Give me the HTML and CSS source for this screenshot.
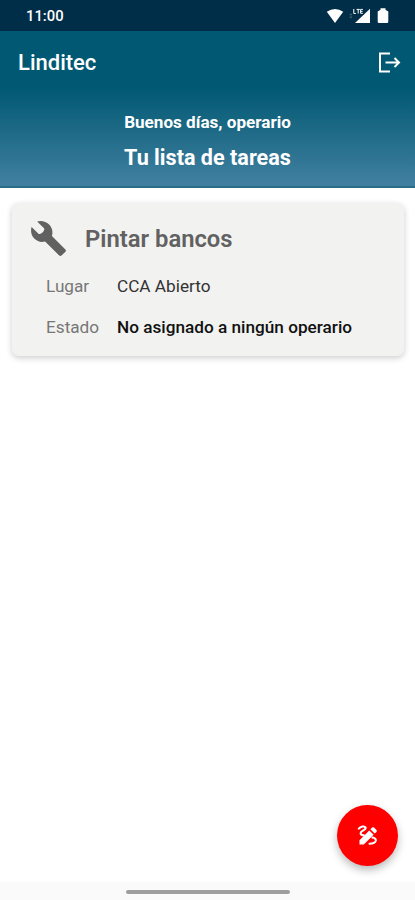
FILE: index.html
```html
<!DOCTYPE html>
<html lang="es">
<head>
  <meta charset="UTF-8" />
  <meta name="viewport" content="width=device-width, initial-scale=1.0"/>
  <title>Linditec</title>
  <link rel="stylesheet" href="styles.css">
</head>
<body>
  <div class="status-bar">
    <span class="clock">11:00</span>
    <div class="status-icons">
      <svg class="wifi" width="18" height="16" viewBox="0 0 18 16"><path d="M0.8 3.8Q9-1.600 17.2 3.8L9 15z"/></svg>
      <svg class="signal" width="22" height="16" viewBox="0 0 22 16">
        <path d="M21 0.7V15H6z"/>
        <path class="lte-back" d="M3 0h12v6.5H3z"/>
        <path class="lte" d="M4.8 1v4.5h2M7.6 1.4h3.2M9.2 1.4v4.1M13.8 1.4h-2.2v3.9h2.2M11.6 3.3h2"/>
        <path class="data" d="M0.4 7.2l1.5-2 1.5 2zM0.4 8.5l1.5 2 1.5-2z"/>
      </svg>
      <svg class="battery" width="12" height="16" viewBox="0 0 12 16"><path d="M3.5 0.3h5v1.5l2.8 1.7v10.2q0 1.3-1.3 1.3H2q-1.3 0-1.3-1.3V3.5l2.8-1.7z"/></svg>
    </div>
  </div>

  <header>
    <div class="toolbar">
      <span class="app-name">Linditec</span>
      <svg class="logout" width="24" height="22" viewBox="0 0 24 22"><path d="M13 1.500H3v18h10M8.500 10.500H22M17.500 6l4.500 4.500-4.500 4.500"/></svg>
    </div>
    <p class="greeting">Buenos días, operario</p>
    <h1>Tu lista de tareas</h1>
  </header>

  <main>
    <div class="card">
      <div class="card-title">
        <svg width="39" height="39" viewBox="0 0 24 24"><path d="M22.400 18.800l-8.300-8.300c.8-2.600.1-5.200-1.700-7.100C10.300 1.300 7.600.7 5 1.500l4.400 4.300c.2 1.700-1.500 3.600-3.400 3.500L1.600 4.900C.8 7.400 1.400 10.200 3.400 12.200c1.800 1.800 4.200 2.300 6.500 1.600l8.700 8.700c.4.4 1 .4 1.400 0l2.400-2.300c.4-.4.4-1 0-1.400z"/></svg>
        <h2>Pintar bancos</h2>
      </div>
      <div class="row">
        <span class="label">Lugar</span>
        <span class="place">CCA Abierto</span>
      </div>
      <div class="row">
        <span class="label">Estado</span>
        <span class="state">No asignado a ningún operario</span>
      </div>
    </div>
  </main>

  <button class="fab" aria-label="Nueva tarea">
    <svg width="22" height="22" viewBox="0 0 22 22">
      <path class="pencil" d="M2.5 15.2L12.3 5.4l4.3 4.3L6.8 19.5H2.5zM13.4 4.3l1.7-1.7q1-.9 2 0l2.3 2.3q1 1 0 2l-1.7 1.7z"/>
      <path class="stroke" d="M1.8 3.700C3.500 1.500 7.500.5 8.600 2.500c1.200 2.400-5.200 3.300-5 5.800.1 1.300 1.600 1.900 3.200 1.900M15.500 12.600c2.400.3 3.700 1.500 3.300 3.200-.5 1.900-2.800 2.900-6.300 2.900"/>
    </svg>
  </button>

  <div class="nav-bar"><div class="handle"></div></div>
</body>
</html>
```
FILE: styles.css
```css
* {
  margin: 0;
  padding: 0;
  box-sizing: border-box;
}

body {
  height: 900px;
  display: flex;
  flex-direction: column;
  background-color: #fff;
  font-family: Roboto, sans-serif;
  overflow: hidden;
}

.status-bar {
  height: 31px;
  padding: 0 26px;
  display: flex;
  justify-content: space-between;
  align-items: center;
  background-color: #002d47;
  color: #fff;
}

.clock {
  font-size: 14.8px;
  font-weight: 500;
}

.status-icons {
  display: flex;
  fill: #fff;
}

.signal {
  margin-left: 5px;
}

.battery {
  margin-left: 6px;
}

.lte-back {
  fill: #002d47;
}

.lte {
  fill: none;
  stroke: #fff;
  stroke-width: 1;
}

.data {
  fill: #48677c;
}

header {
  height: 157px;
  background: linear-gradient(#005872 0%, #005872 36%, #407f9f 98%);
  border-bottom: 2px solid #2c6d88;
  color: #fff;
  text-align: center;
}

.toolbar {
  height: 63px;
  padding: 0 14px 0 18px;
  display: flex;
  justify-content: space-between;
  align-items: center;
}

.app-name {
  font-size: 22px;
  font-weight: 500;
}

.logout {
  fill: none;
  stroke: #fff;
  stroke-width: 2;
}

.greeting {
  margin-top: 17px;
  font-size: 17.1px;
  line-height: 22px;
  font-weight: 700;
}

h1 {
  margin-top: 11px;
  font-size: 21.6px;
  line-height: 27px;
  font-weight: 700;
}

main {
  flex: 1;
  padding: 15px 11px 15px 12px;
}

.card {
  height: 153px;
  padding: 15px 17px;
  background-color: #f2f2f0;
  border-radius: 7px;
  box-shadow: 0 2px 6px rgba(0, 0, 0, 0.2);
}

.card-title {
  height: 41px;
  display: flex;
  align-items: center;
  gap: 17px;
  color: #616161;
  fill: #616161;
}

h2 {
  font-size: 23.8px;
  font-weight: 600;
}

.row {
  height: 41px;
  padding-left: 17px;
  display: flex;
  align-items: center;
  font-size: 17.2px;
}

.card-title + .row {
  margin-top: 6px;
}

.label {
  width: 71px;
  color: #777;
}

.place {
  color: #333;
}

.state {
  color: #111;
  font-weight: 500;
}

.fab {
  position: absolute;
  left: 337px;
  top: 805px;
  width: 61px;
  height: 61px;
  border: none;
  border-radius: 50%;
  background-color: #f00;
  box-shadow: 0 4px 8px rgba(0, 0, 0, 0.28);
  display: flex;
  justify-content: center;
  align-items: center;
}

.pencil {
  fill: #fff;
}

.stroke {
  fill: none;
  stroke: #fff;
  stroke-width: 2;
  stroke-linecap: round;
}

.nav-bar {
  height: 18px;
  padding-top: 8px;
  background-color: #fafafa;
}

.handle {
  width: 164px;
  height: 4px;
  margin: 0 auto;
  border-radius: 2px;
  background-color: #9e9e9e;
}
```
